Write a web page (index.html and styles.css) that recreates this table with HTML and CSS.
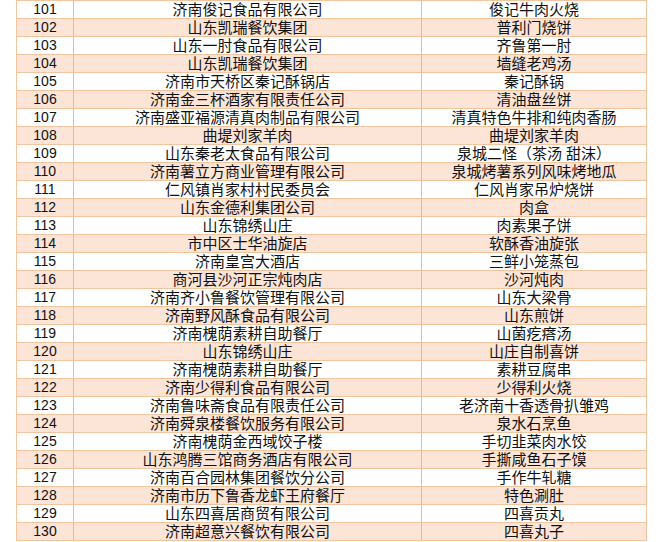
FILE: index.html
```html
<!DOCTYPE html>
<html lang="zh-CN">
<head>
<meta charset="utf-8">
<title>名单</title>
<link rel="stylesheet" href="styles.css">
</head>
<body>
<div class="sheet">
  <div class="row"><div class="num">101</div><div class="co">济南俊记食品有限公司</div><div class="pr">俊记牛肉火烧</div></div>
  <div class="row alt"><div class="num">102</div><div class="co">山东凯瑞餐饮集团</div><div class="pr">普利门烧饼</div></div>
  <div class="row"><div class="num">103</div><div class="co">山东一肘食品有限公司</div><div class="pr">齐鲁第一肘</div></div>
  <div class="row alt"><div class="num">104</div><div class="co">山东凯瑞餐饮集团</div><div class="pr">墙缝老鸡汤</div></div>
  <div class="row"><div class="num">105</div><div class="co">济南市天桥区秦记酥锅店</div><div class="pr">秦记酥锅</div></div>
  <div class="row alt"><div class="num">106</div><div class="co">济南金三杯酒家有限责任公司</div><div class="pr">清油盘丝饼</div></div>
  <div class="row"><div class="num">107</div><div class="co">济南盛亚福源清真肉制品有限公司</div><div class="pr">清真特色牛排和纯肉香肠</div></div>
  <div class="row alt"><div class="num">108</div><div class="co">曲堤刘家羊肉</div><div class="pr">曲堤刘家羊肉</div></div>
  <div class="row"><div class="num">109</div><div class="co">山东秦老太食品有限公司</div><div class="pr">泉城二怪（茶汤 甜沫）</div></div>
  <div class="row alt"><div class="num">110</div><div class="co">济南薯立方商业管理有限公司</div><div class="pr">泉城烤薯系列风味烤地瓜</div></div>
  <div class="row"><div class="num">111</div><div class="co">仁风镇肖家村村民委员会</div><div class="pr">仁风肖家吊炉烧饼</div></div>
  <div class="row alt"><div class="num">112</div><div class="co">山东金德利集团公司</div><div class="pr">肉盒</div></div>
  <div class="row"><div class="num">113</div><div class="co">山东锦绣山庄</div><div class="pr">肉素果子饼</div></div>
  <div class="row alt"><div class="num">114</div><div class="co">市中区士华油旋店</div><div class="pr">软酥香油旋张</div></div>
  <div class="row"><div class="num">115</div><div class="co">济南皇宫大酒店</div><div class="pr">三鲜小笼蒸包</div></div>
  <div class="row alt"><div class="num">116</div><div class="co">商河县沙河正宗炖肉店</div><div class="pr">沙河炖肉</div></div>
  <div class="row"><div class="num">117</div><div class="co">济南齐小鲁餐饮管理有限公司</div><div class="pr">山东大梁骨</div></div>
  <div class="row alt"><div class="num">118</div><div class="co">济南野风酥食品有限公司</div><div class="pr">山东煎饼</div></div>
  <div class="row"><div class="num">119</div><div class="co">济南槐荫素耕自助餐厅</div><div class="pr">山菌疙瘩汤</div></div>
  <div class="row alt"><div class="num">120</div><div class="co">山东锦绣山庄</div><div class="pr">山庄自制喜饼</div></div>
  <div class="row"><div class="num">121</div><div class="co">济南槐荫素耕自助餐厅</div><div class="pr">素耕豆腐串</div></div>
  <div class="row alt"><div class="num">122</div><div class="co">济南少得利食品有限公司</div><div class="pr">少得利火烧</div></div>
  <div class="row"><div class="num">123</div><div class="co">济南鲁味斋食品有限责任公司</div><div class="pr">老济南十香透骨扒雏鸡</div></div>
  <div class="row alt"><div class="num">124</div><div class="co">济南舜泉楼餐饮服务有限公司</div><div class="pr">泉水石烹鱼</div></div>
  <div class="row"><div class="num">125</div><div class="co">济南槐荫金西域饺子楼</div><div class="pr">手切韭菜肉水饺</div></div>
  <div class="row alt"><div class="num">126</div><div class="co">山东鸿腾三馆商务酒店有限公司</div><div class="pr">手撕咸鱼石子馍</div></div>
  <div class="row"><div class="num">127</div><div class="co">济南百合园林集团餐饮分公司</div><div class="pr">手作牛轧糖</div></div>
  <div class="row alt"><div class="num">128</div><div class="co">济南市历下鲁香龙虾王府餐厅</div><div class="pr">特色涮肚</div></div>
  <div class="row"><div class="num">129</div><div class="co">山东四喜居商贸有限公司</div><div class="pr">四喜贡丸</div></div>
  <div class="row alt"><div class="num">130</div><div class="co">济南超意兴餐饮有限公司</div><div class="pr">四喜丸子</div></div>
</div>
</body>
</html>
```
FILE: styles.css
```css
html, body {
  margin: 0;
  padding: 0;
  background: #ffffff;
}

.sheet {
  margin-left: 16px;
  width: 631px;
  border-top: 1px solid #f2c4a0;
  font-family: "Liberation Sans", "Noto Sans CJK SC", sans-serif;
  font-size: 15px;
  color: #111111;
}

.row {
  display: grid;
  grid-template-columns: 57px 348px 225px;
  height: 17px;
  border-bottom: 1px solid #f2c4a0;
  border-left: 1px solid #f2c4a0;
  background: #ffffff;
}

.row.alt {
  background: #fce4d6;
}

.row > div {
  text-align: center;
  line-height: 17px;
  white-space: nowrap;
}

.num {
  font-size: 14px;
  border-right: 1px solid #c4c4c4;
}

.co {
  border-right: 1px solid #c4c4c4;
}

.pr {
  border-right: 1px solid #f2c4a0;
}
```
